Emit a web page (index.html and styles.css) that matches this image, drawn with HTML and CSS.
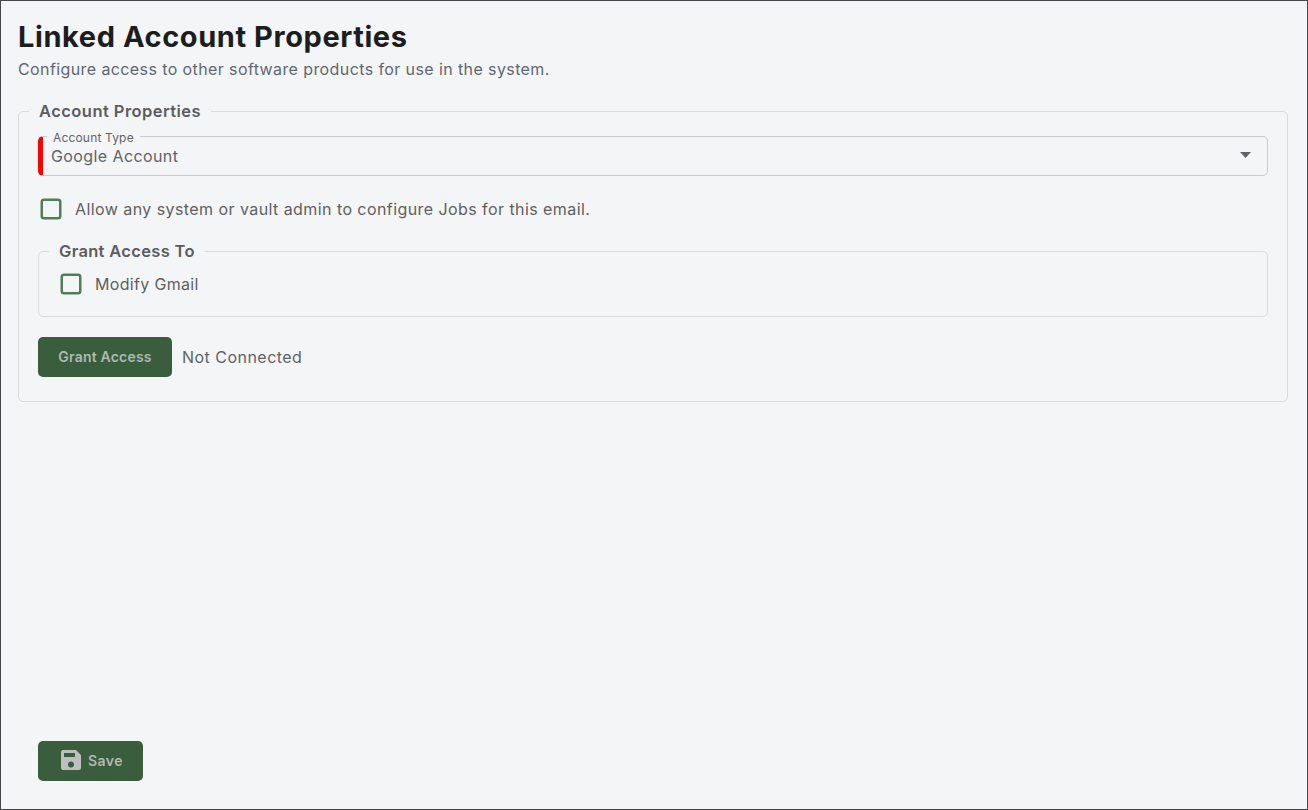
FILE: index.html
```html
<!DOCTYPE html>
<html lang="en">
<head>
<meta charset="utf-8">
<title>Linked Account Properties</title>
<link rel="stylesheet" href="styles.css">
</head>
<body>
<main class="page">
  <div class="content">
    <h1 class="title">Linked Account Properties</h1>
    <p class="subtitle">Configure access to other software products for use in the system.</p>
    <fieldset class="group outer">
      <legend class="legend outer-legend">Account Properties</legend>
      <fieldset class="select">
        <legend class="select-label">Account Type</legend>
        <span class="select-value">Google Account</span>
        <svg class="caret" width="11" height="6" viewBox="0 0 11 6"><path d="M0 0h11L5.500 6z"/></svg>
      </fieldset>
      <label class="check first"><span class="box"></span><span>Allow any system or vault admin to configure Jobs for this email.</span></label>
      <fieldset class="group inner">
        <legend class="legend inner-legend">Grant Access To</legend>
        <label class="check second"><span class="box"></span><span>Modify Gmail</span></label>
      </fieldset>
      <div class="connect">
        <button class="btn grant" type="button">Grant Access</button>
        <span class="status">Not Connected</span>
      </div>
    </fieldset>
  </div>
  <div class="footer">
    <button class="btn save" type="button">
      <svg width="20" height="20" viewBox="0 0 20 20"><path fill-rule="evenodd" d="M2 0h13l5 5v13a2 2 0 0 1-2 2H2a2 2 0 0 1-2-2V2a2 2 0 0 1 2-2zM3 3v4h11V3zm7 8.500a3 3 0 1 0 0 6 3 3 0 0 0 0-6z"/></svg>
      Save
    </button>
  </div>
</main>
</body>
</html>
```

FILE: styles.css
```css
* { box-sizing: border-box; }
html, body { margin: 0; height: 100%; }
body { font-family: Inter, "Liberation Sans", sans-serif; background: #f4f5f7; color: #5f6368; letter-spacing: 0.4px; }
.page {
  height: 810px;
  border: 1px solid #44464a;
  display: flex;
  flex-direction: column;
  justify-content: space-between;
  padding: 0 19px 0 17px;
}
.title { margin: 18px 0 0; font-size: 29px; line-height: 36px; font-weight: 700; color: #1c1d1f; letter-spacing: 0.58px; }
.subtitle { margin: 2px 0 0; font-size: 16px; line-height: 24px; color: #5f6771; }
.group { margin: 0; border: 1px solid #d9dbdd; border-radius: 5px; min-width: 0; }
.outer { margin-top: 20px; height: 301px; padding: 8px 19px 0; }
.inner { margin-top: 20px; height: 76px; padding: 11px 22px 0; }
.legend { padding: 0 10px; font-size: 16.5px; line-height: 20px; font-weight: 600; color: #5c5d5e; letter-spacing: 0.45px; }
.outer-legend { margin-left: -9px; }
.inner-legend { margin-left: -12px; letter-spacing: 0.32px; }
.select {
  position: relative;
  margin: 0;
  height: 47px;
  min-width: 0;
  padding: 0 0 0 8px;
  border: 1px solid #c9cbcd;
  border-left: 5px solid #ff0000;
  border-radius: 5px;
}
.select-label { position: relative; top: 2px; margin-left: -4px; padding: 0 6px; font-size: 12px; line-height: 14px; color: #5f6368; letter-spacing: 0.17px; }
.select-value { display: block; font-size: 16px; line-height: 24px; margin-top: 1px; color: #5f6368; }
.caret { position: absolute; right: 16px; top: 9px; fill: #5f6368; }
.check { display: flex; align-items: center; gap: 14px; font-size: 16px; line-height: 24px; color: #605f5f; }
.first { margin-top: 21px; padding-left: 3px; letter-spacing: 0.43px; }
.second { letter-spacing: 0.33px; }
.box { width: 20px; height: 20px; border: 2px solid #4f7f57; border-radius: 3px; box-shadow: 0 0 0 0.5px #4f7f57; background: #f4f5f7; flex: none; }
.connect { display: flex; align-items: center; gap: 10px; margin-top: 20px; }
.status { font-size: 16px; color: #5f6368; letter-spacing: 0.47px; }
.btn {
  height: 40px;
  border: 0;
  border-radius: 5px;
  background: #3a5d3e;
  color: #b0bab1;
  font-family: inherit;
  font-size: 14px;
  font-weight: 600;
  letter-spacing: 0.2px;
  padding-bottom: 2px;
}
.grant { width: 134px; padding-left: 0; padding-right: 0; }
.footer { padding: 0 0 28px 20px; }
.save { width: 105px; display: flex; align-items: center; gap: 7px; padding: 0 0 2px 23px; letter-spacing: 0.45px; }
.save svg { fill: #bdc0bd; flex: none; }
```
